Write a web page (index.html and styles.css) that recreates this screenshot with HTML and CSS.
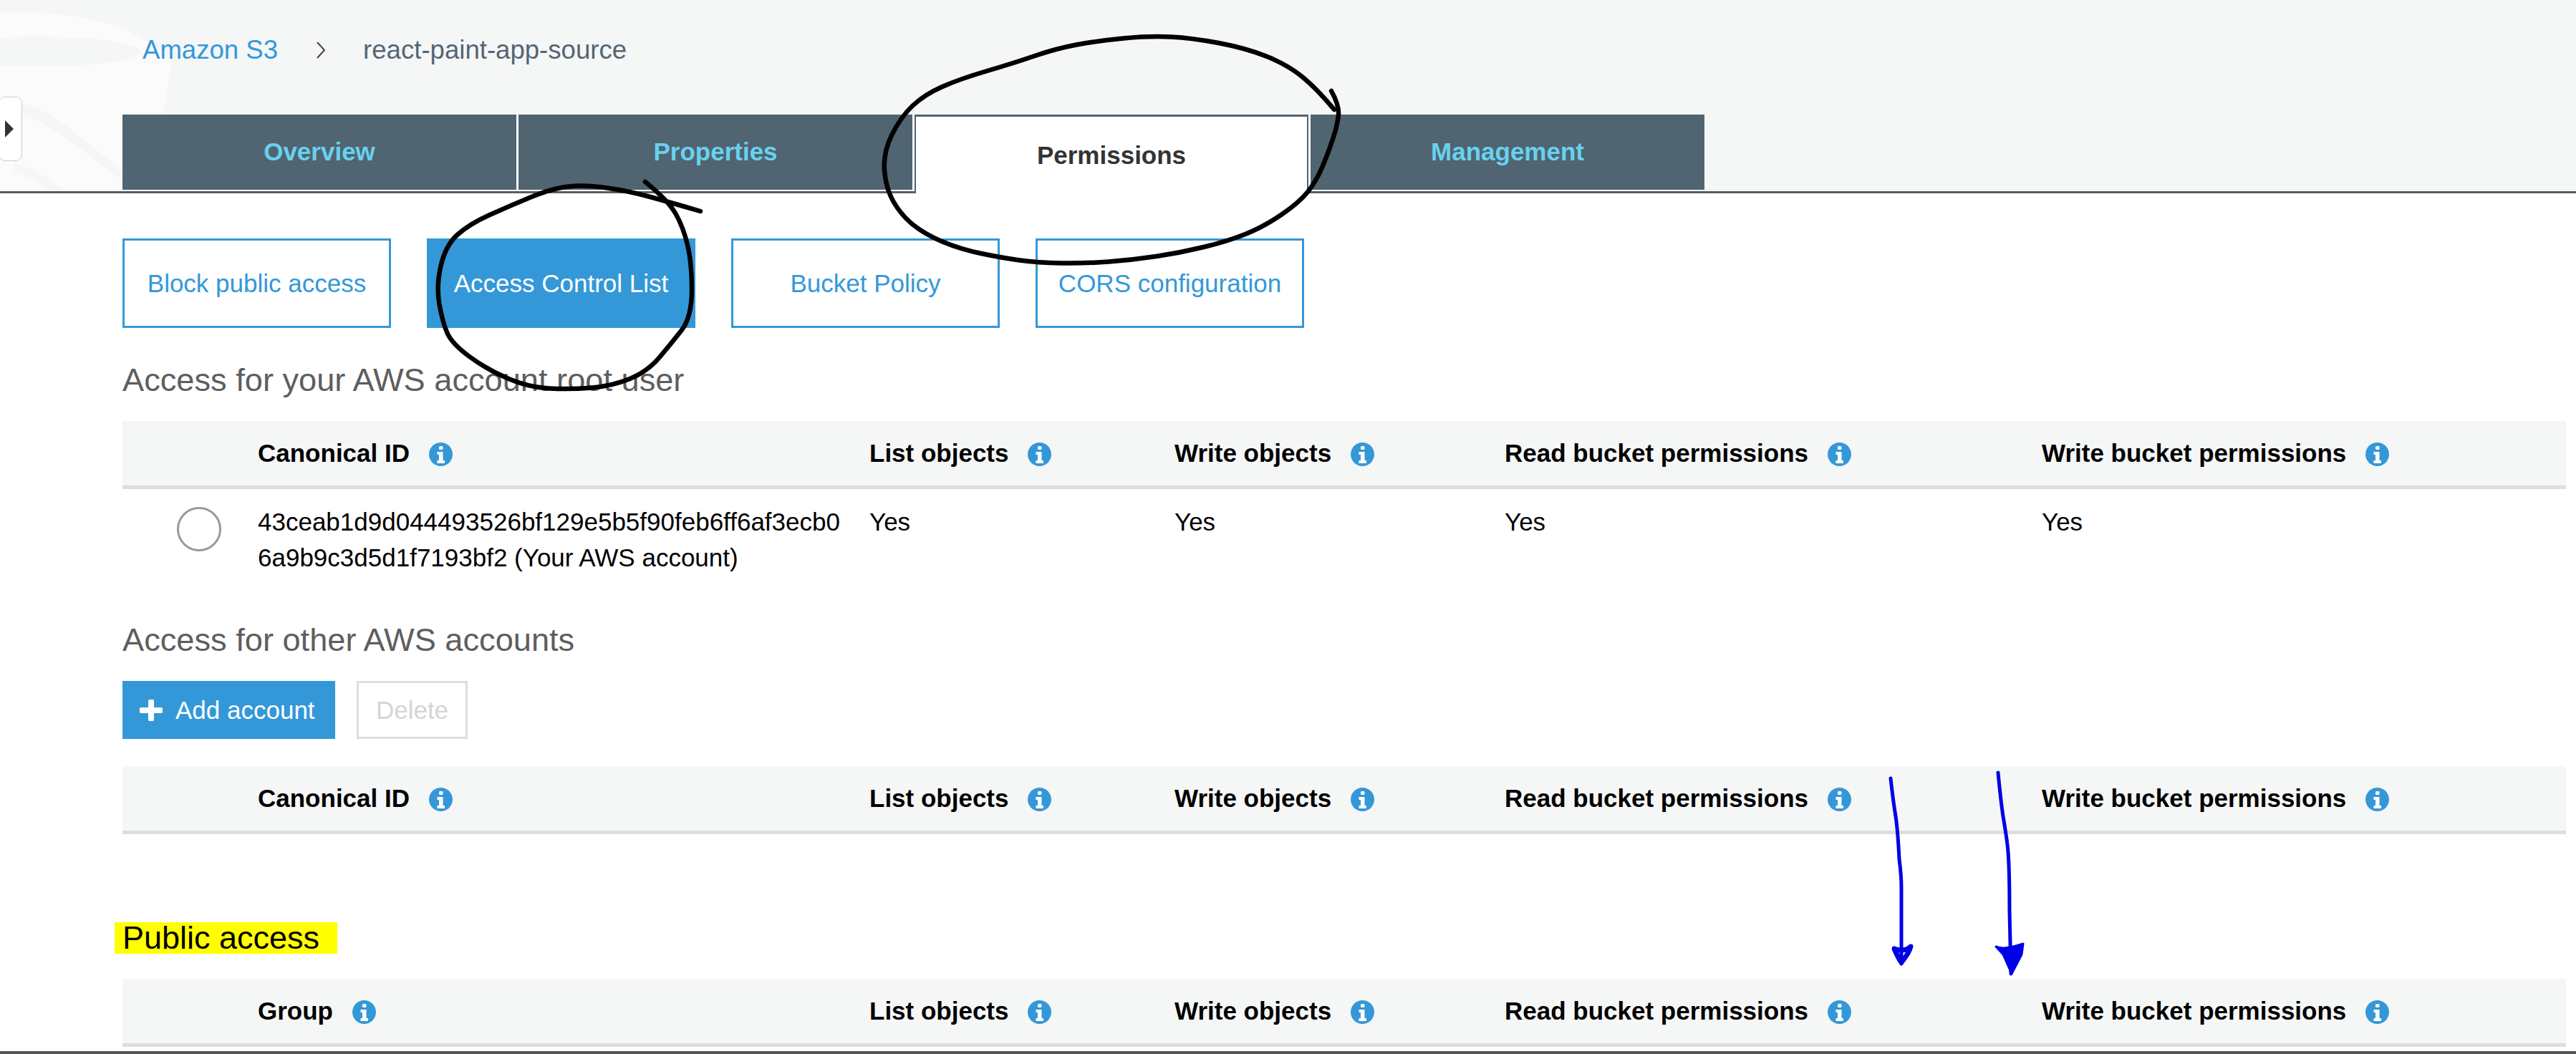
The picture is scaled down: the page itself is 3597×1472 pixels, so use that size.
FILE: index.html
```html
<!DOCTYPE html>
<html lang="en">
<head>
<meta charset="UTF-8">
<meta name="viewport" content="width=device-width, initial-scale=1.0">
<title>react-paint-app-source - S3 bucket</title>
<link rel="stylesheet" href="styles.css">
</head>
<body>

<svg class="defs" width="0" height="0">
    <symbol id="info" viewBox="0 0 33 33">
        <circle cx="16.5" cy="16.5" r="16.5" fill="#3498d8"/>
        <rect x="14" y="5" width="5.5" height="5" rx="1.5" fill="#fff"/>
        <path d="M11.5 13h8v12h2.5v4H11.5v-4h2.5v-8h-2.5z" fill="#fff"/>
    </symbol>
</svg>

<div class="page">
    <header class="top">
        <svg class="watermark" width="260" height="267" viewBox="0 0 260 267">
            <path d="M0 18C90 14 190 28 240 88L228 160H171V267H0z" fill="#fbfbfb"/>
            <ellipse cx="50" cy="72" rx="146" ry="21" fill="#f5f6f6"/>
            <path d="M30 145C70 150 120 200 171 238V252C120 215 70 170 30 160z" fill="#f5f6f6"/>
            <path d="M20 228C50 235 70 250 92 267H70C55 255 40 245 20 240z" fill="#f5f6f6"/>
        </svg>

        <button class="nav-toggle" aria-label="Open navigation"></button>

        <nav class="crumbs">
            <a class="crumb-link">Amazon S3</a>
            <svg class="crumb-sep" width="14" height="24" viewBox="0 0 14 24"><path d="M2 1l10 11L2 23" fill="none" stroke="#444" stroke-width="2"/></svg>
            <span class="crumb-here">react-paint-app-source</span>
        </nav>

        <div class="tabs">
            <a class="tab">Overview</a>
            <a class="tab">Properties</a>
            <a class="tab active">Permissions</a>
            <a class="tab">Management</a>
        </div>
    </header>

    <main class="content">
        <div class="subtabs">
            <a class="subtab">Block public access</a>
            <a class="subtab active">Access Control List</a>
            <a class="subtab">Bucket Policy</a>
            <a class="subtab">CORS configuration</a>
        </div>

        <h2 class="section-title first">Access for your AWS account root user</h2>
        <table class="acl">
            <colgroup>
                <col class="col-radio"><col class="col-id"><col class="col-list"><col class="col-write"><col class="col-read"><col class="col-writeb">
            </colgroup>
            <thead>
                <tr>
                    <th></th>
                    <th>Canonical ID<svg class="info"><use href="#info"/></svg></th>
                    <th>List objects<svg class="info"><use href="#info"/></svg></th>
                    <th>Write objects<svg class="info"><use href="#info"/></svg></th>
                    <th>Read bucket permissions<svg class="info"><use href="#info"/></svg></th>
                    <th>Write bucket permissions<svg class="info"><use href="#info"/></svg></th>
                </tr>
            </thead>
            <tbody>
                <tr>
                    <td class="radio-cell"><span class="radio"></span></td>
                    <td class="id-cell">43ceab1d9d044493526bf129e5b5f90feb6ff6af3ecb06a9b9c3d5d1f7193bf2 (Your AWS account)</td>
                    <td>Yes</td>
                    <td>Yes</td>
                    <td>Yes</td>
                    <td>Yes</td>
                </tr>
            </tbody>
        </table>

        <h2 class="section-title second">Access for other AWS accounts</h2>
        <div class="actions">
            <button class="btn primary">
                <svg class="plus" width="32" height="30" viewBox="0 0 32 30"><path d="M12 3a3 3 0 0 1 8 0v8h9a4 4 0 0 1 0 8h-9v8a4 4 0 0 1-8 0v-8H3a4 4 0 0 1 0-8h9z" fill="#fff"/></svg>
                Add account
            </button>
            <button class="btn disabled">Delete</button>
        </div>
        <table class="acl other">
            <colgroup>
                <col class="col-radio"><col class="col-id"><col class="col-list"><col class="col-write"><col class="col-read"><col class="col-writeb">
            </colgroup>
            <thead>
                <tr>
                    <th></th>
                    <th>Canonical ID<svg class="info"><use href="#info"/></svg></th>
                    <th>List objects<svg class="info"><use href="#info"/></svg></th>
                    <th>Write objects<svg class="info"><use href="#info"/></svg></th>
                    <th>Read bucket permissions<svg class="info"><use href="#info"/></svg></th>
                    <th>Write bucket permissions<svg class="info"><use href="#info"/></svg></th>
                </tr>
            </thead>
        </table>

        <h2 class="public-title"><span class="marker">Public access</span></h2>
        <table class="acl">
            <colgroup>
                <col class="col-radio"><col class="col-id"><col class="col-list"><col class="col-write"><col class="col-read"><col class="col-writeb">
            </colgroup>
            <thead>
                <tr>
                    <th></th>
                    <th>Group<svg class="info"><use href="#info"/></svg></th>
                    <th>List objects<svg class="info"><use href="#info"/></svg></th>
                    <th>Write objects<svg class="info"><use href="#info"/></svg></th>
                    <th>Read bucket permissions<svg class="info"><use href="#info"/></svg></th>
                    <th>Write bucket permissions<svg class="info"><use href="#info"/></svg></th>
                </tr>
            </thead>
        </table>
    </main>

    <footer class="bottom-bar"></footer>

    <!-- hand drawn pen marks on top of the screenshot -->
    <svg class="ink" width="3597" height="1472" viewBox="0 0 3597 1472">
        <path class="pen-black" d="M1863 153Q1838 123 1817.5 106.5Q1797 90 1768 78.5Q1739 67 1701.5 60Q1664 53 1635 51.5Q1606 50 1569 53.5Q1532 57 1503 62.5Q1474 68 1445 78Q1416 88 1378.5 99Q1341 110 1316 121Q1291 132 1274.5 147.5Q1258 163 1245.5 188Q1233 213 1235 238Q1237 263 1247.5 281.5Q1258 300 1274.5 313.5Q1291 327 1316 337.5Q1341 348 1370 354Q1399 360 1424 363.5Q1449 367 1482 367.5Q1515 368 1548 365.5Q1581 363 1614.5 358Q1648 353 1681 345Q1714 337 1739 327Q1764 317 1789 300Q1814 283 1826 268Q1838 253 1846.5 233Q1855 213 1861.5 193Q1868 173 1869 160Q1870 147 1859 127"/>
        <path class="pen-black" d="M978 295Q937 283 908 275Q879 267 848 262.5Q817 258 794 260.5Q771 263 742 275Q713 287 684 300Q655 313 638.5 328Q622 343 615.5 371.5Q609 400 613.5 425Q618 450 624.5 465Q631 480 655.5 498Q680 516 709 528.5Q738 541 767.5 542.5Q797 544 826 541.5Q855 539 879.5 529Q904 519 920.5 499.5Q937 480 951.5 461.5Q966 443 966 405Q966 367 960 342Q954 317 943.5 298.5Q933 280 901 254"/>
        <path class="pen-blue" d="M2640 1087C2642 1105 2644 1122 2647 1140C2650 1160 2651 1180 2652 1200C2654 1215 2655 1225 2655 1240V1346"/>
        <path class="pen-head" d="M2645 1325C2648 1332 2652 1340 2655 1344C2660 1338 2666 1330 2668 1322C2662 1328 2652 1328 2645 1325z"/>
        <path class="pen-blue" d="M2790 1079C2792 1100 2794 1120 2797 1140C2800 1158 2803 1175 2804 1190C2806 1215 2806 1245 2806 1273L2808 1360"/>
        <path class="pen-fill" d="M2787 1322C2795 1325 2803 1325 2825 1318L2823 1333L2809 1360L2797 1333z"/>
    </svg>
</div>

</body>
</html>
```

FILE: styles.css
```css
* {
    box-sizing: border-box;
}
body {
    margin: 0;
    font-family: "Liberation Sans", Arial, sans-serif;
    background-color: #fff;
    color: #000;
}
.defs {
    position: absolute;
}
.page {
    position: relative;
    display: flex;
    flex-direction: column;
    height: 100vh;
    overflow: hidden;
}

/* top area */
.top {
    position: relative;
    flex: none;
    height: 270px;
    padding-left: 171px;
    background-color: #f5f6f6;
    border-bottom: 3px solid #545f68;
}
.watermark {
    position: absolute;
    top: 0;
    left: 0;
}
.nav-toggle {
    position: absolute;
    top: 135px;
    left: -2px;
    width: 33px;
    height: 90px;
    padding: 0;
    background-color: #fff;
    border: 1px solid #ccc;
    border-radius: 9px;
}
.nav-toggle::after {
    content: "";
    position: absolute;
    top: 32px;
    left: 8px;
    border-left: 12px solid #333;
    border-top: 12px solid transparent;
    border-bottom: 12px solid transparent;
}
.crumbs {
    position: relative;
    display: flex;
    align-items: center;
    height: 60px;
    padding: 40px 0 0 28px;
    box-sizing: content-box;
    font-size: 36.6px;
}
.crumb-link {
    color: #3498d8;
}
.crumb-sep {
    margin: 0 52px 0 53px;
}
.crumb-here {
    color: #546673;
}
.tabs {
    position: relative;
    display: flex;
    gap: 3px;
    width: fit-content;
    margin-top: 60px;
    padding-bottom: 2px;
    background-color: #fff;
}
.tab {
    display: flex;
    align-items: center;
    justify-content: center;
    width: 550px;
    height: 105px;
    padding-bottom: 2px;
    background-color: #506471;
    color: #68d2ee;
    font-size: 35px;
    font-weight: bold;
}
.tab.active {
    height: 110px;
    margin-bottom: -5px;
    padding-bottom: 0;
    background-color: #fff;
    color: #333;
    border: 2px solid #506471;
    border-top-width: 3px;
    border-bottom: none;
}

/* content */
.content {
    flex: 1;
    min-height: 0;
    padding: 0 14px 0 171px;
}
.subtabs {
    display: flex;
    gap: 50px;
    margin-top: 63px;
}
.subtab {
    display: flex;
    align-items: center;
    justify-content: center;
    width: 375px;
    height: 125px;
    color: #3498d8;
    font-size: 35px;
    border: 3px solid #3498d8;
}
.subtab.active {
    background-color: #3498d8;
    color: #fff;
}
.section-title {
    height: 60px;
    margin: 0;
    color: #5e5e5e;
    font-size: 45.2px;
    font-weight: normal;
    line-height: 60px;
}
.section-title.first {
    margin-top: 43px;
    margin-bottom: 27px;
}
.section-title.second {
    margin-top: 60px;
    margin-bottom: 27px;
}
.acl {
    width: 3412px;
    table-layout: fixed;
    border-collapse: separate;
    border-spacing: 0;
    font-size: 35px;
}
.col-radio { width: 189px; }
.col-id { width: 854px; }
.col-list { width: 426px; }
.col-write { width: 461px; }
.col-read { width: 750px; }
.col-writeb { width: 732px; }
.acl th {
    height: 95px;
    padding: 0;
    background-color: #f5f6f6;
    border-bottom: 5px solid #dcdddd;
    text-align: left;
    font-weight: bold;
    white-space: nowrap;
}
.acl td {
    padding: 21px 0 0;
    line-height: 50px;
    vertical-align: top;
}
.acl .radio-cell {
    padding-top: 25px;
    padding-left: 76px;
}
.acl .id-cell {
    padding-right: 36px;
    word-break: break-all;
}
.radio {
    display: block;
    width: 62px;
    height: 62px;
    border: 3px solid #999;
    border-radius: 50%;
}
.info {
    width: 33px;
    height: 33px;
    margin-left: 27px;
    vertical-align: -6px;
}
.actions {
    display: flex;
    gap: 30px;
}
.btn {
    display: flex;
    align-items: center;
    height: 81px;
    padding: 0;
    font-family: inherit;
    font-size: 35px;
}
.btn.primary {
    width: 297px;
    padding-left: 24px;
    background-color: #3498d8;
    color: #fff;
    border: none;
}
.plus {
    margin-right: 18px;
}
.btn.disabled {
    justify-content: center;
    width: 155px;
    background-color: #fff;
    color: #d5d5d5;
    border: 3px solid #ddd;
}
.acl.other {
    margin-top: 38px;
}
.public-title {
    height: 44px;
    margin: 123px 0 35px -11px;
    font-size: 45px;
    font-weight: normal;
    line-height: 44px;
}
.marker {
    display: inline-block;
    padding: 0 25px 0 11px;
    background-color: #ff0;
}
.bottom-bar {
    flex: none;
    height: 4px;
    background-color: #555;
}

/* pen marks */
.ink {
    position: absolute;
    top: 0;
    left: 0;
    pointer-events: none;
}
.pen-black {
    fill: none;
    stroke: #000;
    stroke-width: 6.5;
    stroke-linecap: round;
    stroke-linejoin: round;
}
.pen-blue {
    fill: none;
    stroke: #0000e6;
    stroke-width: 5;
    stroke-linecap: round;
    stroke-linejoin: round;
}
.pen-head {
    fill: none;
    stroke: #0000e6;
    stroke-width: 7;
    stroke-linejoin: round;
}
.pen-fill {
    fill: #0000e6;
    stroke: #0000e6;
    stroke-width: 3;
    stroke-linejoin: round;
}
```
